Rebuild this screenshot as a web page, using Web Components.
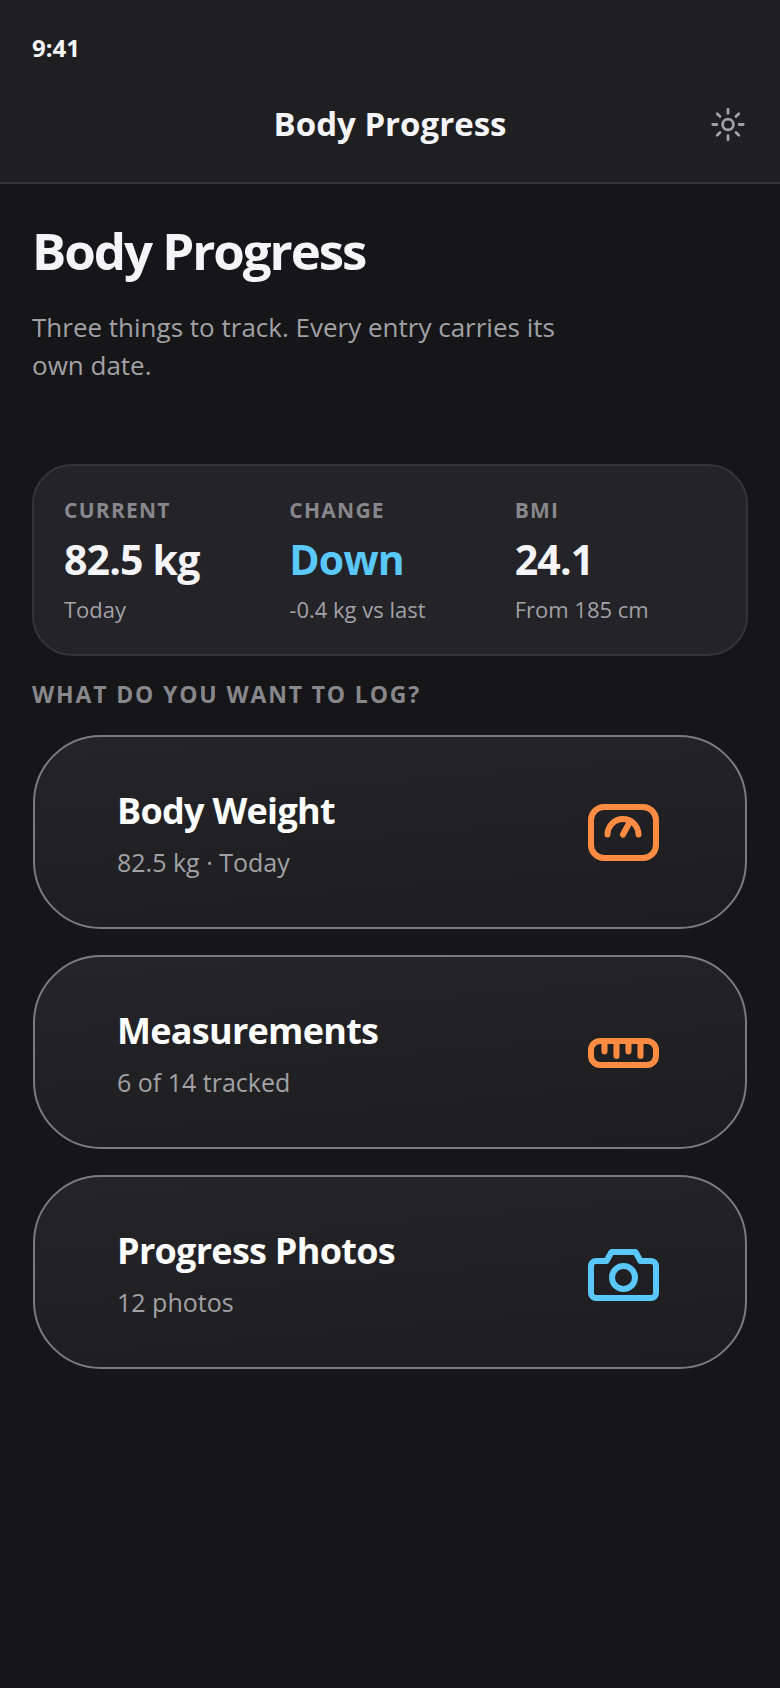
<!DOCTYPE html>
<html lang="en">
<head>
<meta charset="utf-8">
<meta name="viewport" content="width=device-width, initial-scale=1">
<title>Body Progress</title>
<style>
html {
	background: #161618;
}
body {
	margin: 0;
	font-family: "Open Sans", "Noto Sans", sans-serif;
	color: #f5f5f9;
	--bar: #1f1f21;
	--panel: #242328;
	--line: #353538;
	--muted: #a1a1a6;
	--label: #87878c;
	--blue: #5ac8fa;
	--orange: #ff8c42;
}
</style>
</head>
<body>
<body-progress-page></body-progress-page>

<script>
const topBar = document.createElement('template');
topBar.innerHTML = `
<header>
	<div class="status"><slot name="time"></slot></div>
	<div class="nav">
		<div class="title"><slot></slot></div>
		<button type="button" aria-label="Switch theme">
			<svg viewBox="0 0 40 40" width="40" height="40" fill="none" stroke="currentColor" stroke-width="2.8" stroke-linecap="round">
				<circle cx="20" cy="20.5" r="5.4"/>
				<path d="M20 5.3v4M20 31.7v4M4.8 20.5h4M31.2 20.5h4M9.2 9.7l2.8 2.8M28 28.5l2.8 2.8M9.2 31.3l2.8-2.8M28 12.5l2.8-2.8"/>
			</svg>
		</button>
	</div>
</header>
<style>
:host { display: block; }
header {
	background: var(--bar);
	border-bottom: 2px solid var(--line);
	padding: 32px 32px 38px;
}
.status {
	font-size: 24px;
	line-height: 32px;
	font-weight: 700;
}
.nav {
	display: grid;
	grid-template-columns: 1fr auto 1fr;
	align-items: center;
	padding-top: 40px;
}
.title {
	grid-column: 2;
	font-size: 33px;
	line-height: 40px;
	font-weight: 700;
}
button {
	justify-self: end;
	display: flex;
	padding: 0;
	border: 0;
	background: none;
	color: var(--muted);
	cursor: pointer;
}
</style>
`;

class TopBar extends HTMLElement {
	constructor() {
		super();
		const shadow = this.attachShadow({ mode: 'open' });
		shadow.appendChild(topBar.content.cloneNode(true));
	}
}

const statItem = document.createElement('template');
statItem.innerHTML = `
<div class="label"><slot name="label"></slot></div>
<div class="value"><slot></slot></div>
<div class="note"><slot name="note"></slot></div>
<style>
:host {
	display: flex;
	flex-direction: column;
	gap: 8px;
	min-width: 0;
}
.label {
	font-size: 21px;
	line-height: 28px;
	font-weight: 700;
	letter-spacing: 0.06em;
	text-transform: uppercase;
	color: var(--label);
}
.value {
	font-size: 41px;
	line-height: 54px;
	font-weight: 700;
	letter-spacing: -0.02em;
	white-space: nowrap;
}
:host([accent]) .value { color: var(--blue); }
.note {
	font-size: 22px;
	line-height: 30px;
	color: var(--muted);
}
</style>
`;

class StatItem extends HTMLElement {
	constructor() {
		super();
		const shadow = this.attachShadow({ mode: 'open' });
		shadow.appendChild(statItem.content.cloneNode(true));
	}
}

const statPanel = document.createElement('template');
statPanel.innerHTML = `
<slot></slot>
<style>
:host {
	display: grid;
	grid-template-columns: repeat(3, minmax(0, 1fr));
	gap: 24px;
	padding: 30px;
	background: var(--panel);
	border: 2px solid var(--line);
	border-radius: 40px;
}
</style>
`;

class StatPanel extends HTMLElement {
	constructor() {
		super();
		const shadow = this.attachShadow({ mode: 'open' });
		shadow.appendChild(statPanel.content.cloneNode(true));
	}
}

// strokes for the log cards, drawn on a 72 x 72 grid
const icons = {
	scale: `
		<rect x="3" y="10" width="65" height="51" rx="13"/>
		<path d="M19.5 37.5a15.5 15.5 0 0 1 31 0M35 37.5l6.5-12"/>`,
	ruler: `
		<rect x="3" y="24" width="65" height="24" rx="9"/>
		<path d="M16.5 25v9.5M28.5 25v14M40.5 25v9.5M52.5 25v14"/>`,
	camera: `
		<path d="M8 24H18.5L23.5 15H47.5L52.5 24H63a5 5 0 0 1 5 5V56a5 5 0 0 1-5 5H8a5 5 0 0 1-5-5V29a5 5 0 0 1 5-5z"/>
		<circle cx="35.5" cy="40.5" r="11.5"/>`
};

const logCard = document.createElement('template');
logCard.innerHTML = `
<button type="button">
	<span class="text">
		<span class="title"><slot></slot></span>
		<span class="detail"><slot name="detail"></slot></span>
	</span>
	<svg viewBox="0 0 72 72" width="72" height="72" fill="none" stroke="currentColor" stroke-width="6" stroke-linecap="round" stroke-linejoin="round" aria-hidden="true"></svg>
</button>
<style>
:host { display: block; }
button {
	display: flex;
	align-items: center;
	justify-content: space-between;
	width: 100%;
	box-sizing: border-box;
	padding: 49px 85px 47px 82px;
	border: 2px solid #7b7b7e;
	border-radius: 68px;
	background: linear-gradient(175deg, #252429, #1d1d1f);
	background-origin: border-box;
	font: inherit;
	color: inherit;
	text-align: left;
	cursor: pointer;
}
.text {
	display: flex;
	flex-direction: column;
	gap: 8px;
}
.title {
	font-size: 36px;
	line-height: 50px;
	font-weight: 700;
	letter-spacing: -0.02em;
	color: #fff;
}
.detail {
	font-size: 25px;
	line-height: 36px;
	color: var(--muted);
}
svg {
	flex: none;
	color: var(--orange);
}
:host([tone="blue"]) svg { color: var(--blue); }
</style>
`;

class LogCard extends HTMLElement {
	constructor() {
		super();
		const shadow = this.attachShadow({ mode: 'open' });
		shadow.appendChild(logCard.content.cloneNode(true));
	}
	connectedCallback() {
		this.shadowRoot.querySelector('svg').innerHTML = icons[this.getAttribute('icon')] || '';
	}
}

const page = document.createElement('template');
page.innerHTML = `
<top-bar><span slot="time">9:41</span>Body Progress</top-bar>
<main>
	<h1>Body Progress</h1>
	<p>Three things to track. Every entry carries its own date.</p>
	<stat-panel>
		<stat-item><span slot="label">Current</span>82.5 kg<span slot="note">Today</span></stat-item>
		<stat-item accent><span slot="label">Change</span>Down<span slot="note">-0.4 kg vs last</span></stat-item>
		<stat-item><span slot="label">BMI</span>24.1<span slot="note">From 185 cm</span></stat-item>
	</stat-panel>
	<h2>What do you want to log?</h2>
	<div class="cards">
		<log-card icon="scale">Body Weight<span slot="detail">82.5 kg · Today</span></log-card>
		<log-card icon="ruler">Measurements<span slot="detail">6 of 14 tracked</span></log-card>
		<log-card icon="camera" tone="blue">Progress Photos<span slot="detail">12 photos</span></log-card>
	</div>
</main>
<style>
:host { display: block; }
main {
	padding: 36px 32px;
}
h1 {
	margin: 0;
	font-size: 51px;
	line-height: 60px;
	font-weight: 700;
	letter-spacing: -0.04em;
}
p {
	margin: 28px 0 80px;
	max-width: 560px;
	font-size: 26px;
	line-height: 38px;
	color: var(--muted);
}
h2 {
	margin: 22px 0 24px;
	font-size: 23px;
	line-height: 32px;
	font-weight: 700;
	letter-spacing: 0.08em;
	text-transform: uppercase;
	color: var(--label);
}
.cards {
	display: flex;
	flex-direction: column;
	gap: 26px;
	padding: 1px;
}
</style>
`;

class BodyProgressPage extends HTMLElement {
	constructor() {
		super();
		const shadow = this.attachShadow({ mode: 'open' });
		shadow.appendChild(page.content.cloneNode(true));
	}
}

window.customElements.define('top-bar', TopBar);
window.customElements.define('stat-item', StatItem);
window.customElements.define('stat-panel', StatPanel);
window.customElements.define('log-card', LogCard);
window.customElements.define('body-progress-page', BodyProgressPage);
</script>
</body>
</html>
